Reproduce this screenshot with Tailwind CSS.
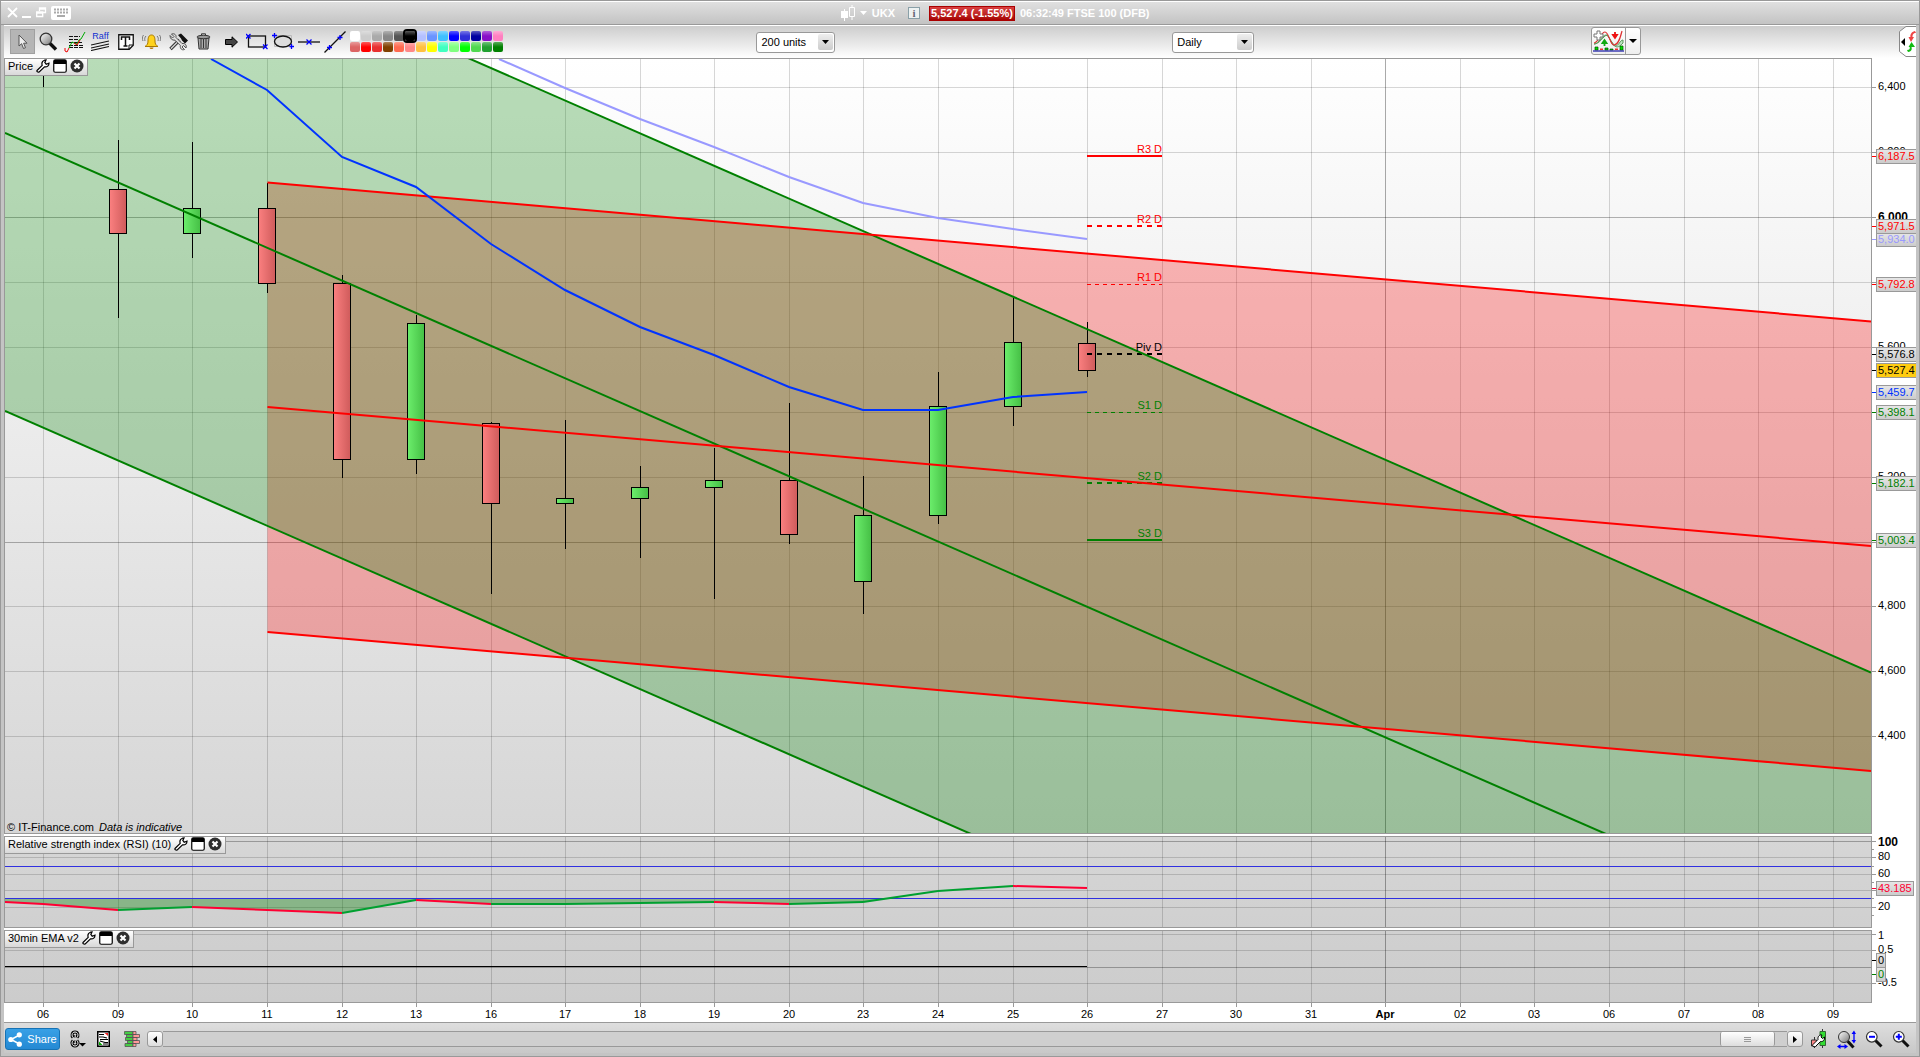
<!DOCTYPE html>
<html lang="en">
<head>
    <meta charset="UTF-8">
    <meta name="viewport" content="width=device-width, initial-scale=1.0">
    <title>UKX - FTSE 100 (DFB)</title>
    <script src="https://cdn.jsdelivr.net/npm/@tailwindcss/browser@4"></script>
</head>
<body class="h-screen flex flex-col overflow-hidden bg-[#c4c4c4] border border-[#999] pb-[3px] font-['Liberation_Sans',Arial,sans-serif] text-[11px] leading-[15px] text-black">
    <svg class="absolute w-0 h-0">
        <symbol id="wrench" viewBox="0 0 14 14">
            <path d="M1 11.5 6.2 6.3C5.6 4.300 6.300 2 8.500 1.200L10 1 8.800 3.500 10.200 5.200 13 4.200C13 6.600 11.200 8.300 8.500 7.800L3.200 13C1.800 13.500.500 12.500 1 11.500Z" fill="#fff" stroke="#000" stroke-width="1.200"/>
        </symbol>
        <symbol id="window" viewBox="0 0 14 14">
            <rect x=".75" y=".75" width="12.500" height="12.500" rx="1.500" fill="#fff" stroke="#000" stroke-width="1.200"/>
            <path d="M1 1h12v4H1Z" fill="#000"/>
        </symbol>
        <symbol id="close" viewBox="0 0 14 14">
            <circle cx="7" cy="7" r="6.500" fill="#2e2e2e"/>
            <path d="m4.500 4.500 5 5m0-5-5 5" stroke="#fff" stroke-width="2.200"/>
        </symbol>
        <linearGradient id="lens" x1="0" y1="0" x2="1" y2="1"><stop offset="0" stop-color="#fff"/><stop offset="1" stop-color="#777"/></linearGradient>
        <linearGradient id="up" x1="0" x2="1"><stop offset="0" stop-color="#6cee6c"/><stop offset="1" stop-color="#45bf45"/></linearGradient>
        <linearGradient id="down" x1="0" x2="1"><stop offset="0" stop-color="#fb8080"/><stop offset="1" stop-color="#cf5b5b"/></linearGradient>
    </svg>

    <!-- Title bar -->
    <header class="h-[24px] shrink-0 flex items-center border-t border-t-white border-b border-b-[#999] bg-linear-to-b from-[#e0e0e0] to-[#c3c3c3] text-white font-bold px-[6px]">
        <div class="flex-[522] flex items-center gap-[4px]">
            <button aria-label="Close"><svg width="11" height="12" viewBox="0 0 11 12"><path d="m1 1 9 9m0-9-9 9" stroke="#fff" stroke-width="1.800"/></svg></button>
            <button aria-label="Minimise"><svg width="10" height="12" viewBox="0 0 10 12"><path d="M0 10h9" stroke="#fff" stroke-width="2"/></svg></button>
            <button aria-label="Restore"><svg width="11" height="12" viewBox="0 0 11 12" fill="none" stroke="#fff" stroke-width="1.300"><path d="M3.500 4V1h6v4.500H7M3.500 2h6"/><path d="M.7 5h6v4.500h-6Zm0 1h6"/></svg></button>
            <button aria-label="Keyboard"><svg width="20" height="14" viewBox="0 0 20 14"><rect width="20" height="14" rx="2" fill="#fff"/><path d="M3 3.500h14M3 6.500h14" stroke="#aaa" stroke-width="2" stroke-dasharray="2 1"/><path d="M6 10h8" stroke="#aaa" stroke-width="2"/></svg></button>
        </div>
        <button class="flex items-center gap-[4px] mr-[13px]">
            <svg width="15" height="16" viewBox="0 0 15 16"><path d="M0 6h7v7H0ZM3 4h1v12H3Z" fill="#fff"/><path d="M8.500 2.500h5v9h-5ZM11 0v2.500m0 9V15" fill="none" stroke="#fff"/></svg>
            <svg width="7" height="4" viewBox="0 0 7 4"><path d="M0 0h7L3.500 4Z" fill="#fff"/></svg>
            <span class="ml-[1px]">UKX</span>
        </button>
        <button aria-label="Information" class="w-[12px] h-[12px] border border-[#8aa0a8] bg-[#eef2f2] text-[#667] leading-[10px] font-['Liberation_Serif',serif] mr-[9px]">i</button>
        <span class="bg-linear-to-b from-[#d94040] to-[#a80000] border border-[#a00] px-[1px] leading-[13px]">5,527.4 (-1.55%)</span>
        <span class="ml-[5px]">06:32:49 FTSE 100 (DFB)</span>
        <div class="flex-[478]"></div>
    </header>

    <main class="flex-1 min-h-0 flex flex-col mx-[3px]">
        <!-- Toolbar -->
        <div class="h-[33px] shrink-0 flex items-center border-t border-white bg-linear-to-b from-[#cdcdcd] to-white">
            <div class="flex items-center pl-[6px] pb-[1px]">
                <button aria-label="Select" class="w-[25px] h-[25px] flex items-center justify-center bg-[#b5b5b5] border border-[#a0a0a0] mr-[4px]">
                    <svg width="10" height="16" viewBox="0 0 10 16"><path d="M1 1v11l2.600-2.300L5.500 14.500l2-.8L5.600 9.200H9Z" fill="#eee" stroke="#555"/></svg>
                </button>
                <button aria-label="Zoom" class="mr-[6px]"><svg width="19" height="19" viewBox="0 0 19 19"><path d="m10.500 11 6.500 6.500" stroke="#111" stroke-width="3.400"/><circle cx="7" cy="7" r="5.800" fill="url(#lens)" stroke="#333" stroke-width="1.300"/></svg></button>
                <button aria-label="Notes" class="mr-[5px]"><svg width="22" height="22" viewBox="0 0 22 22" fill="none"><path d="M5 5.500h11M5 8.500h9M5 11.500h13M5 14.500h14M5 16.500h14" stroke="#111" stroke-width="1.200" stroke-dasharray="4 1"/><path d="M1 17v3l2 1 2-4" stroke="#e00"/><path d="m5 17 3-6 2 1 3 1 2-4 2-1 4-7" stroke="#0a0"/><path d="m10 12 3 2 3-5" stroke="#e00"/></svg></button>
                <button aria-label="Raff" class="w-[19px] mr-[8px] flex flex-col items-center text-[9px] leading-[8px] text-[#1030d0]">Raff<svg width="19" height="11" viewBox="0 0 19 11"><path d="m0 5 18-4M0 8l18-4M0 10.500l18-4" stroke="#111" stroke-width="1.200"/></svg></button>
                <button aria-label="Text" class="mr-[8px]"><svg width="16" height="16" viewBox="0 0 16 16"><path d="M.75.75h14.500v10.500l-4 4H.75Z" fill="#fff" stroke="#111" stroke-width="1.300"/><path d="M11 15v-4h4" fill="none" stroke="#111"/><path d="M3.500 6V3h8v3M7.500 3v9M5.500 12h4" fill="none" stroke="#111" stroke-width="1.500"/></svg></button>
                <button aria-label="Alerts" class="mr-[8px]"><svg width="19" height="16" viewBox="0 0 19 16"><path d="M9.500 1C6.500 1 6 4 6 7s-.8 4-3 5.500h13C13.800 11 13 10 13 7s-.5-6-3.500-6Z" fill="#ffd21c" stroke="#a87800"/><path d="M7.500 13.500a2 1.500 0 0 0 4 0Z" fill="#b87800"/><path d="M4 2C2.500 3.500 2.500 5 3 7M1.500 1C0 3 0 5 1 7M15 2c1.500 1.500 1.500 3 1 5m1.500-6C19 3 19 5 18 7" fill="none" stroke="#777"/></svg></button>
                <button aria-label="Tools" class="mr-[8px]"><svg width="19" height="18" viewBox="0 0 19 18"><path d="m1.500 16 9-9" stroke="#222" stroke-width="3.400"/><path d="m1.900 15.600 8.600-8.600" stroke="#ccc" stroke-width="1.600"/><path d="M1 2.500 3.500 5l1.500-1.500L2.500 1c3-1 5 1 4.500 3.500l6 6c3-.5 5 1.500 4 4.500l-2.500-2.500-1.500 1.500 2.500 2.500c-3 1-4.500-1-4.200-4L6 7.200C3 7.500 1 5.500 1 2.500Z" fill="#ddd" stroke="#444" stroke-width=".9"/><path d="m9 2 3-1.500 7 7-3 3-3-3-1-2Z" fill="#111"/></svg></button>
                <button aria-label="Delete" class="mr-[14px]"><svg width="15" height="17" viewBox="0 0 15 17"><path d="m2 5 1 11h9l1-11Z" fill="#aaa" stroke="#333"/><path d="M5 6v9m2.500-9v9M10 6v9" stroke="#333"/><ellipse cx="7.500" cy="4" rx="6.500" ry="1.700" fill="#999" stroke="#333"/><path d="M5.500 2V.8h4V2" fill="none" stroke="#333"/></svg></button>
                <button aria-label="Arrow" class="mr-[8px]"><svg width="13" height="12" viewBox="0 0 13 12"><path d="M.5 3.500H7V.8L12.500 6 7 11.200V8.500H.5Z" fill="#444" stroke="#000"/></svg></button>
                <button aria-label="Rectangle" class="mr-[4px]"><svg width="22" height="17" viewBox="0 0 22 17" fill="none"><rect x="2.500" y="3" width="17" height="11" stroke="#111" stroke-width="1.300"/><path d="m0 1 4.500 4.500m0-4.500L0 5.500m17 6 4.500 4.500m0-4.500L17 16" stroke="#00f" stroke-width="1.300"/></svg></button>
                <button aria-label="Ellipse" class="mr-[4px]"><svg width="22" height="17" viewBox="0 0 22 17" fill="none"><path d="M2.500 2.500h17v11h-17Z" stroke="#bbb"/><ellipse cx="11" cy="8.500" rx="8.500" ry="5.500" fill="#ddd" stroke="#111" stroke-width="1.300"/><path d="M0 2.500h5M2.500 0v5m15 8.500h5M19.500 11v5" stroke="#00f" stroke-width="1.300"/></svg></button>
                <button aria-label="Horizontal line" class="mr-[4px]"><svg width="22" height="8" viewBox="0 0 22 8"><path d="M0 4h22" stroke="#111" stroke-width="1.300"/><path d="m8.500 1.500 5 5m0-5-5 5" stroke="#00f" stroke-width="1.300"/></svg></button>
                <button aria-label="Trend line" class="mr-[4px]"><svg width="22" height="22" viewBox="0 0 22 22"><path d="M.5 21.500 21.500.500" stroke="#111" stroke-width="1.300"/><path d="M3 16.500h5M5.500 14v5m8-12.500h5M16 4v5" stroke="#00f" stroke-width="1.300"/></svg></button>
                <div id="palette" class="grid grid-cols-14 gap-[1px]"></div>
            </div>
            <div class="flex-[301]"></div>
            <label class="relative flex">
                <select aria-label="Units" class="appearance-none w-[79px] h-[21px] bg-white border border-[#999] rounded-[3px] pl-[4px] pr-[18px]"><option>200 units</option></select>
                <span class="absolute right-[2px] top-[2px] w-[15px] h-[16px] rounded-[2px] bg-linear-to-b from-[#eee] to-[#ccc] flex items-center justify-center pointer-events-none"><svg width="7" height="4"><path d="M0 0h7L3.500 4Z"/></svg></span>
            </label>
            <div class="flex-[400]"></div>
            <label class="relative flex">
                <select aria-label="Timeframe" class="appearance-none w-[82px] h-[21px] bg-white border border-[#999] rounded-[3px] pl-[4px] pr-[18px]"><option>Daily</option></select>
                <span class="absolute right-[2px] top-[2px] w-[15px] h-[16px] rounded-[2px] bg-linear-to-b from-[#eee] to-[#ccc] flex items-center justify-center pointer-events-none"><svg width="7" height="4"><path d="M0 0h7L3.500 4Z"/></svg></span>
            </label>
            <div class="flex-[400]"></div>
            <div class="flex h-[28px] mb-[3px] bg-linear-to-b from-white to-[#eee] border border-[#999] rounded-[3px]">
                <button aria-label="Add indicator" class="w-[34px] pl-[1px] border-r border-[#999]"><svg width="31" height="22" viewBox="0 0 31 22" fill="none"><path d="M1 14c5 0 8-9 12-9s5 11 9 11 5-6 8-6v3c-3 3-6 6-9 2L14 5C10 6 7 14 1 14Z" fill="#bfe5c4" stroke="#5a9a5a"/><path d="M1 13C6 12 8 2 12 2s5 13 9 13S27 9 29 1" stroke="#d33" stroke-width="1.200"/><path d="M4 1h3v3h3v3H7v3H4V7H1V4h3Z" fill="#fff" stroke="#777"/><path d="M22 2v4m-2-1 2 3 2-3Z" stroke="#e11" stroke-width="1.800"/><path d="M11.500 16v-4m-2 1 2-3 2 3Z" stroke="#1a1" stroke-width="1.800"/><path d="M2 17h3v3H2Zm10 1h3v2h-3Zm5 1h3v1h-3Zm10-3h3v4h-3Z" fill="#0d0" stroke="#050" stroke-width=".7"/><path d="M7 18.500h3v1.500H7Zm15 0h3v1.500h-3Z" fill="#e33"/><path d="M0 21h31" stroke="#22a" stroke-width="1.300"/></svg></button>
                <button aria-label="Indicator menu" class="w-[14px] flex items-center justify-center"><svg width="8" height="4"><path d="M0 0h8L4 4Z"/></svg></button>
            </div>
            <div class="flex-[305]"></div>
            <button aria-label="Orders panel" class="mb-[2px]"><svg class="block" width="18" height="31" viewBox="0 0 18 31"><path d="M18 .5H8L1.500 5.500v20L8 30.500h10" fill="#fff" stroke="#888"/><path d="m3 16 4-4v8Z" fill="#000"/><path d="M17 5c-4 1-5 4-4.500 6h-2L13 16l3-5h-1.500c0-2 .5-4 3.500-4Z" fill="#e44"/><path d="M10 26c4-.5 4-3 3.500-5H17l-3.500-5-3 5h1.200c.3 2 0 3-2.700 3Z" fill="#1b1"/></svg></button>
        </div>

        <!-- Price pane -->
        <section class="flex-1 min-h-0 flex bg-white">
            <div class="relative flex-1 min-w-0 border border-[#999] bg-linear-to-b from-white to-[#d6d6d6] overflow-hidden">
                <svg id="price" class="absolute inset-0 w-full h-full" viewBox="5 59 1866 774" preserveAspectRatio="none"></svg>
                <div id="pivots" class="absolute inset-0"></div>
                <div class="absolute left-0 top-0 h-[17px] flex items-center gap-[3px] pl-[3px] pr-[3px] pb-[2px] bg-linear-to-b from-white to-[#d8d8d8] border-r border-b border-[#999]">
                    <span>Price</span>
                    <button aria-label="Price settings"><svg class="block" width="14" height="14"><use href="#wrench"/></svg></button>
                    <button aria-label="Price window"><svg class="block" width="14" height="14"><use href="#window"/></svg></button>
                    <button aria-label="Close price"><svg class="block" width="14" height="14"><use href="#close"/></svg></button>
                </div>
                <p class="absolute left-[2px] bottom-[-2px]">© IT-Finance.com <i class="ml-[2px]">Data is indicative</i></p>
            </div>
            <div id="priceAxis" class="relative w-[44px] overflow-hidden"></div>
        </section>

        <!-- RSI pane -->
        <section class="h-[94px] shrink-0 flex bg-white pt-[2px]">
            <div class="relative flex-1 min-w-0 border border-[#999] bg-linear-to-b from-[#d6d6d6] to-[#d0d0d0] overflow-hidden">
                <svg id="rsi" class="absolute inset-0 w-full h-full" viewBox="5 837 1866 90" preserveAspectRatio="none"></svg>
                <div class="absolute left-0 top-0 h-[17px] flex items-center gap-[3px] pl-[3px] pr-[3px] pb-[2px] bg-linear-to-b from-white to-[#d8d8d8] border-r border-b border-[#999]">
                    <span>Relative strength index (RSI) (10)</span>
                    <button aria-label="RSI settings"><svg class="block" width="14" height="14"><use href="#wrench"/></svg></button>
                    <button aria-label="RSI window"><svg class="block" width="14" height="14"><use href="#window"/></svg></button>
                    <button aria-label="Close RSI"><svg class="block" width="14" height="14"><use href="#close"/></svg></button>
                </div>
            </div>
            <div id="rsiAxis" class="relative w-[44px]"></div>
        </section>

        <!-- EMA pane -->
        <section class="h-[75px] shrink-0 flex bg-white pt-[2px]">
            <div class="relative flex-1 min-w-0 border border-[#999] bg-linear-to-b from-[#d0d0d0] to-[#cccccc] overflow-hidden">
                <svg id="ema" class="absolute inset-0 w-full h-full" viewBox="5 931 1866 71" preserveAspectRatio="none"></svg>
                <div class="absolute left-0 top-0 h-[17px] flex items-center gap-[3px] pl-[3px] pr-[3px] pb-[2px] bg-linear-to-b from-white to-[#d8d8d8] border-r border-b border-[#999]">
                    <span>30min EMA v2</span>
                    <button aria-label="EMA settings"><svg class="block" width="14" height="14"><use href="#wrench"/></svg></button>
                    <button aria-label="EMA window"><svg class="block" width="14" height="14"><use href="#window"/></svg></button>
                    <button aria-label="Close EMA"><svg class="block" width="14" height="14"><use href="#close"/></svg></button>
                </div>
            </div>
            <div id="emaAxis" class="relative w-[44px]"></div>
        </section>

        <!-- Dates -->
        <div class="h-[19px] shrink-0 bg-white pr-[44px]">
            <div id="dates" class="relative h-full"></div>
        </div>
    </main>

    <!-- Bottom bar -->
    <footer class="h-[31px] shrink-0 mx-[3px] flex items-center border-t border-[#999] bg-linear-to-b from-[#dedede] to-[#c8c8c8] pl-[1px] pr-[6px] pt-[2px]">
        <button class="w-[55px] h-[22px] flex items-center justify-center gap-[5px] rounded-[3px] border border-[#1672b4] bg-linear-to-b from-[#38a0e6] to-[#2489d3] text-white mr-[10px]">
            <svg width="14" height="15" viewBox="0 0 14 15"><path d="M11.500 3 3 7.500l8.500 4.500" fill="none" stroke="#fff" stroke-width="1.500"/><circle cx="11.300" cy="2.800" r="2.600" fill="#fff"/><circle cx="2.800" cy="7.500" r="2.600" fill="#fff"/><circle cx="11.300" cy="12.200" r="2.600" fill="#fff"/></svg>
            Share
        </button>
        <button aria-label="Link" class="mr-[11px]"><svg width="16" height="18" viewBox="0 0 16 18" fill="none"><g stroke="#000" stroke-width="3"><path d="M3 7.500C1.500 6 1.500 2 5 2s3.500 4 2 5.500M5.200 5v2.500M3 10.500C1.500 12 1.500 16 5 16s3.500-4 2-5.500M5.200 10.500V13"/></g><g stroke="#fff"><path d="M3 7.500C1.500 6 1.500 2 5 2s3.500 4 2 5.500M5.200 5v2.500M3 10.500C1.500 12 1.500 16 5 16s3.500-4 2-5.500M5.200 10.500V13"/></g><path d="M9 13h7l-3.500 3.500Z" fill="#000"/></svg></button>
        <button aria-label="Report" class="mr-[14px]"><svg width="13" height="16" viewBox="0 0 13 16"><rect x=".75" y=".75" width="11.500" height="14.500" fill="#fff" stroke="#000" stroke-width="1.500"/><path d="M2 3.500h5M2 6h4l4 1M3 8.500h8M3 10l5 1.500h3M6 13h5" fill="none" stroke="#000" stroke-width="1.200"/><path d="M7.500 2H11v3Z" fill="#e22"/><path d="M2 14v-3.500L5.500 14Z" fill="#0a0"/></svg></button>
        <button aria-label="Order book" class="mr-[7px]"><svg width="16" height="16" viewBox="0 0 16 16" stroke="#555" stroke-width=".8"><path d="M.5.500H9v3H.5Zm2 3H9v3H2.500Zm-1 3H9v3H1.500Zm2 3H9v3H3.500Zm-2.500 3h8v3H1Z" fill="#4c4"/><path d="M9 .5h3v3H9Zm0 3h6.500v3H9Zm0 3h4v3H9Zm0 3h6.500v3H9Zm0 3h3v3H9Z" fill="#f99"/></svg></button>
        <div class="flex-1 h-[16px] flex items-stretch mr-[8px]">
            <button aria-label="Scroll left" class="w-[16px] flex items-center justify-center rounded-[3px] border border-[#999] bg-linear-to-b from-white to-[#ddd]"><svg width="4" height="7"><path d="M4 0v7L0 3.500Z"/></svg></button>
            <div class="flex-1 flex justify-end border-y border-[#999] bg-[#cfcfcf] pr-[12px]">
                <button aria-label="Scroll" class="w-[55px] flex items-center justify-center rounded-[2px] border-x border-[#999] bg-linear-to-b from-white to-[#ddd]"><svg width="7" height="7"><path d="M0 1.500h7m-7 2h7m-7 2h7" stroke="#999"/></svg></button>
            </div>
            <button aria-label="Scroll right" class="w-[16px] flex items-center justify-center rounded-[3px] border border-[#999] bg-linear-to-b from-white to-[#ddd]"><svg width="4" height="7"><path d="M0 0v7l4-3.500Z"/></svg></button>
        </div>
        <button aria-label="Chart settings" class="mr-[10px]"><svg width="16" height="20" viewBox="0 0 16 20"><path d="M3.500 8v11M11.500 0v19" stroke="#333"/><path d="M.5 11h5v6h-5Z" fill="#f88" stroke="#333"/><path d="M9 2.500h5.500v14H9Z" fill="#3d3" stroke="#363"/><path d="m2 15.500 5-5c-.5-3 1.500-5 4-4.500L10 8l1.500 1.500L13.500 8c.5 3-1.500 5-4 4.500l-5 5c-2 1-3.500-.5-2.500-2Z" fill="#fff" stroke="#000"/></svg></button>
        <button aria-label="Fit zoom" class="mr-[9px]"><svg width="19" height="19" viewBox="0 0 19 19"><path d="m10.500 11 6 6.500" stroke="#111" stroke-width="3"/><circle cx="7" cy="7" r="5.500" fill="url(#lens)" stroke="#333"/><path d="M17 3v8M2 16.500h7" stroke="#00f" stroke-width="1.300"/><path d="m14.500 4 2.500-3.500L19 4Zm0 6 2.500 3.500 2-3.500ZM3.500 14 0 16.500 3.500 19Zm4 0 3.500 2.500L7.500 19Z" fill="#00f"/></svg></button>
        <button aria-label="Zoom out" class="mr-[9px]"><svg width="18" height="18" viewBox="0 0 18 18"><path d="m10.500 10.500 6 6" stroke="#111" stroke-width="3"/><circle cx="6.800" cy="6.800" r="5.300" fill="#fff" stroke="#333" stroke-width="1.200"/><path d="M4 6.800h6" stroke="#00f" stroke-width="2"/></svg></button>
        <button aria-label="Zoom in"><svg width="18" height="18" viewBox="0 0 18 18"><path d="m10.500 10.500 6 6" stroke="#111" stroke-width="3"/><circle cx="6.800" cy="6.800" r="5.300" fill="#fff" stroke="#333" stroke-width="1.200"/><path d="M3.800 6.800h6m-3-3v6" stroke="#00f" stroke-width="2"/></svg></button>
    </footer>

    <script>
        const DATES = [['06', 43], ['09', 118], ['10', 192], ['11', 267], ['12', 342], ['13', 416], ['16', 491], ['17', 565], ['18', 640], ['19', 714], ['20', 789], ['23', 863], ['24', 938], ['25', 1013], ['26', 1087], ['27', 1162], ['30', 1236], ['31', 1311], ['Apr', 1385], ['02', 1460], ['03', 1534], ['06', 1609], ['07', 1684], ['08', 1758], ['09', 1833]];
        const COLORS = ['#ffffff', '#cccccc', '#aaaaaa', '#888888', '#555555', '#000000', '#b4c0ff', '#6a94ff', '#40c0ff', '#0000ff', '#3030d8', '#0000a0', '#8810c8', '#ff80c0',
            '#dc6464', '#ff0000', '#e83030', '#804000', '#ff6a50', '#ff8888', '#ffc040', '#ffff00', '#40ffc0', '#80ff80', '#00ff00', '#50d850', '#20a030', '#008000'];
        // x, high, low, body top, body bottom, rising
        const CANDLES = [
            [118, 140, 318, 189, 234, 0], [192, 142, 258, 208, 234, 1], [267, 183, 293, 208, 284, 0],
            [342, 275, 478, 283, 460, 0], [416, 315, 474, 323, 460, 1], [491, 422, 594, 423, 504, 0],
            [565, 420, 549, 498, 504, 1], [640, 466, 558, 487, 499, 1], [714, 448, 599, 480, 488, 1],
            [789, 403, 544, 480, 535, 0], [863, 476, 614, 515, 582, 1], [938, 372, 524, 406, 516, 1],
            [1013, 298, 426, 342, 407, 1], [1087, 322, 377, 343, 371, 0]
        ];
        const PIVOTS = [['R3 D', 156, 'red', 2, ''], ['R2 D', 226, 'red', 2, '5 5'], ['R1 D', 284.5, 'red', 1, '4 4'], ['Piv D', 354, 'black', 2, '5 5'],
            ['S1 D', 412.5, 'green', 1, '4 4'], ['S2 D', 483, 'green', 2, '5 5'], ['S3 D', 540, 'green', 2, '']];
        const RSI = [[5, 902], [43, 904], [118, 910], [192, 907], [267, 910], [342, 913], [416, 900], [491, 904], [565, 904], [640, 903], [714, 902], [789, 904], [863, 902], [938, 891], [1013, 886], [1087, 888]];
        const RSI_UP = [0, 0, 1, 0, 0, 1, 0, 1, 1, 1, 0, 1, 1, 1, 0];

        function line(x1, y1, x2, y2, color, width = 1, dash = '') {
            return `<line x1="${x1}" y1="${y1}" x2="${x2}" y2="${y2}" stroke="${color}" stroke-width="${width}" stroke-dasharray="${dash}"/>`;
        }

        function grid(rows, strong, top, bottom) {
            let out = DATES.map(([d, x]) => line(x + 0.5, top, x + 0.5, bottom, d === 'Apr' ? '#0005' : '#00000028')).join('');
            out += rows.map(y => line(5, y + 0.5, 1871, y + 0.5, strong.includes(y) ? '#0000004a' : '#00000028')).join('');
            return out;
        }

        function axis(id, top, height, labels, minor, tags) {
            const pct = y => (y - top) / height * 100;
            let out = minor.map(y => `<span class="absolute left-0 w-[2px] h-px bg-[#999]" style="top:${pct(y)}%"></span>`).join('');
            labels.forEach(([text, y, bold]) => {
                out += `<span class="absolute left-0 w-[4px] h-px bg-[#999]" style="top:${pct(y)}%"></span>`;
                // keep the first label clear of the pane's top edge
                out += `<span class="absolute left-[6px] ${bold ? '-mt-[7px] font-bold text-[12px]' : '-mt-[8px]'}" style="top:max(${pct(y)}%, 6px)">${text}</span>`;
            });
            tags.forEach(([text, y, color, back]) => {
                out += `<span class="absolute left-0 w-[4px] h-px" style="top:${pct(y)}%;background:${color}"></span>`;
                out += `<span class="absolute left-[4px] -mt-[7px] h-[15px] px-[1px] leading-[13px] border border-[#999] ${back ? 'bg-[#ffcc11]' : 'bg-linear-to-b from-[#e6e6e6] to-[#cccccc]'}" style="top:${pct(y)}%;color:${color}">${text}</span>`;
            });
            document.getElementById(id).innerHTML = out;
        }

        // Palette
        document.getElementById('palette').innerHTML = COLORS.map((c, i) =>
            `<button aria-label="${c}" class="relative w-[10px] h-[10px] rounded-[2px] bg-linear-to-b from-white/35 to-transparent to-50% ${i === 5 ? 'z-10 outline-2 outline-black' : ''}" style="background-color:${c}"></button>`).join('');

        // Price
        let price = grid([87, 152, 217, 282, 347, 412, 477, 542, 606, 671, 736], [217, 542], 59, 833);
        price += '<polygon points="267.5,182.500 1871,321.500 1871,771 267.5,632" fill="#ff0000" fill-opacity=".28"/>';
        price += '<polygon points="5,-144.800 1871,672.500 1871,1228 5,411" fill="#008000" fill-opacity=".28"/>';
        price += line(43.5, 59, 43.5, 87, '#000');
        CANDLES.forEach(([x, high, low, top, bottom, up]) => {
            price += line(x + 0.5, high, x + 0.5, low, '#000');
            price += `<rect x="${x - 8.5}" y="${top + 0.5}" width="17" height="${bottom - top - 1}" fill="url(#${up ? 'up' : 'down'})" stroke="#000"/>`;
        });
        PIVOTS.forEach(([, y, color, width, dash]) => price += line(1087, y, 1162, y, color, width, dash));
        price += line(5, -144.8, 1871, 672.5, '#008000', 2) + line(5, 133, 1871, 950, '#008000', 2) + line(5, 411, 1871, 1228, '#008000', 2);
        price += line(267.5, 182.5, 1871, 321.5, '#ff0000', 2) + line(267.5, 407, 1871, 546, '#ff0000', 2) + line(267.5, 632, 1871, 771, '#ff0000', 2);
        price += '<polyline points="499,59 565,88 640,119 714,147 789,177 863,203 938,218 1013,229 1087,239" fill="none" stroke="#9999ff" stroke-width="2"/>';
        price += '<polyline points="211,59 267,90 342,157 416,187 491,244 565,290 640,327 714,355 789,387 863,410 938,410 1013,397 1087,392" fill="none" stroke="#0033ff" stroke-width="2"/>';
        document.getElementById('price').innerHTML = price;
        document.getElementById('pivots').innerHTML = PIVOTS.map(([text, y, color]) =>
            `<span class="absolute -mt-[14px]" style="right:${(1871 - 1162) / 18.66}%;top:${(Math.floor(y) - 59) / 7.74}%;color:${color}">${text}</span>`).join('');
        axis('priceAxis', 58, 776,
            [['6,400', 87], ['6,200', 152], ['6,000', 217, 1], ['5,800', 282], ['5,600', 347], ['5,400', 412], ['5,200', 477], ['5,000', 542, 1], ['4,800', 606], ['4,600', 671], ['4,400', 736]], [],
            [['6,187.5', 156, '#ff0000'], ['5,934.0', 239, '#9999ff'], ['5,971.5', 226, '#ff0000'], ['5,792.8', 284, '#ff0000'], ['5,576.8', 354, '#000000'], ['5,527.4', 370, '#000000', 1],
                ['5,459.7', 392, '#0033ff'], ['5,398.1', 412, '#008000'], ['5,182.1', 483, '#008000'], ['5,003.4', 540, '#008000']]);

        // RSI
        let rsi = grid([841, 857, 874, 890, 907], [841], 837, 927);
        rsi += `<polygon points="5,898 ${RSI.slice(0, 13).map(p => p.join()).join(' ')} 892,898" fill="#008000" fill-opacity=".35"/>`;
        rsi += line(5, 866.5, 1871, 866.5, '#3030e0') + line(5, 898.5, 1871, 898.5, '#3030e0');
        RSI_UP.forEach((up, i) => rsi += line(RSI[i][0], RSI[i][1], RSI[i + 1][0], RSI[i + 1][1], up ? '#00a030' : '#ff0033', 2));
        document.getElementById('rsi').innerHTML = rsi;
        axis('rsiAxis', 836, 92, [['100', 841, 1], ['80', 857], ['60', 874], ['', 890], ['20', 907]], [849, 866, 882, 898, 915], [['43.185', 888, '#ff0033']]);

        // EMA
        document.getElementById('ema').innerHTML = grid([934, 950, 967, 983], [967], 931, 1002) + line(5, 966.5, 1087, 966.5, '#000');
        axis('emaAxis', 930, 73, [['1', 934], ['0.5', 950], ['-0.5', 983]], [], [['0', 960, '#000000'], ['0', 974, '#008000']]);

        document.getElementById('dates').innerHTML = DATES.map(([text, x]) =>
            `<span class="absolute top-0 w-px h-[4px] bg-[#999]" style="left:${(x - 4) / 18.68}%"></span><span class="absolute top-[4px] w-[30px] -ml-[15px] text-center ${text === 'Apr' ? 'font-bold' : ''}" style="left:${(x - 4) / 18.68}%">${text}</span>`).join('');
    </script>
</body>
</html>
